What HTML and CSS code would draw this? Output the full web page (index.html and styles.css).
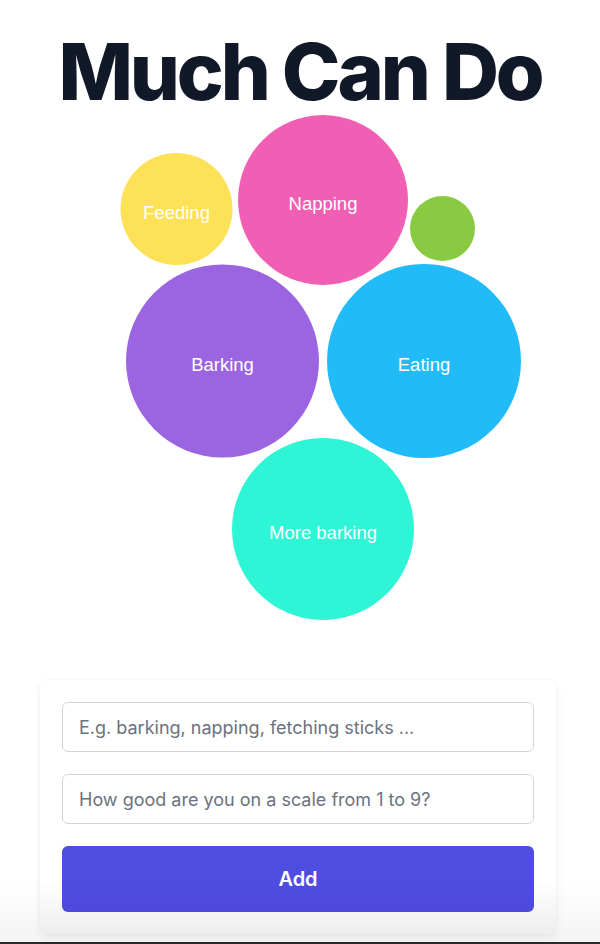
FILE: index.html
```html
<!DOCTYPE html>
<html lang="en">
<head>
<meta charset="utf-8">
<title>Much Can Do</title>
<link rel="stylesheet" href="styles.css">
</head>
<body>
<div class="page">
  <h1 class="title">Much Can Do</h1>
  <svg class="bubbles" width="600" height="520" viewBox="0 111 600 520" xmlns="http://www.w3.org/2000/svg">
    <g class="bubble">
      <circle cx="176.5" cy="209" r="56" fill="#fde157"/>
      <text x="176.5" y="219">Feeding</text>
    </g>
    <g class="bubble">
      <circle cx="323" cy="200" r="85" fill="#f05fb3"/>
      <text x="323" y="210">Napping</text>
    </g>
    <g class="bubble">
      <circle cx="442.5" cy="228.5" r="32.5" fill="#8ac942"/>
    </g>
    <g class="bubble">
      <circle cx="222.5" cy="361" r="96.5" fill="#9b64e0"/>
      <text x="222.5" y="371">Barking</text>
    </g>
    <g class="bubble">
      <circle cx="424" cy="361" r="97" fill="#21bcf8"/>
      <text x="424" y="371">Eating</text>
    </g>
    <g class="bubble">
      <circle cx="323" cy="529" r="91" fill="#2df5d5"/>
      <text x="323" y="539">More barking</text>
    </g>
  </svg>
  <form class="card">
    <input class="field" type="text" placeholder="E.g. barking, napping, fetching sticks ...">
    <input class="field" type="text" placeholder="How good are you on a scale from 1 to 9?">
    <button class="add" type="button">Add</button>
  </form>
</div>
<div class="fade"></div>
</body>
</html>
```
FILE: styles.css
```css
* { box-sizing: border-box; }
html, body { margin: 0; padding: 0; background: #fff; }
body { font-family: Inter, "Noto Sans", sans-serif; }

.page {
  width: 600px;
  height: 944px;
  overflow: hidden;
  border-bottom: 2px solid #2a2a2a;
  display: flex;
  flex-direction: column;
}

.title {
  margin: 0;
  padding-top: 32px;
  font-size: 79px;
  line-height: 79px;
  font-weight: 800;
  letter-spacing: -0.04em;
  text-align: center;
  color: #111827;
}

.bubbles { display: block; flex: none; }
.bubble text {
  font-family: "Liberation Sans", Arial, sans-serif;
  font-size: 18.5px;
  fill: #fff;
  text-anchor: middle;
}

.card {
  margin: 49px 44px 0 40px;
  width: 516px;
  padding: 22px;
  display: flex;
  flex-direction: column;
  gap: 22px;
  background: linear-gradient(to bottom, #fff 80%, #f7f7f7);
  border-radius: 8px;
  box-shadow: 0 4px 10px rgba(0,0,0,0.06), 0 0 4px rgba(0,0,0,0.03);
}

.field {
  height: 50px;
  width: 100%;
  border: 1px solid #d1d5db;
  border-radius: 6px;
  padding: 0 16px;
  font-family: Inter, "Noto Sans", sans-serif;
  font-size: 18px;
  color: #111827;
  background: #fff;
  outline: none;
}
.field::placeholder { color: #6b7280; opacity: 1; }

.add {
  height: 66px;
  width: 100%;
  border: none;
  border-radius: 6px;
  background: #4f4ce1;
  color: #fff;
  font-family: Inter, "Noto Sans", sans-serif;
  font-size: 20px;
  font-weight: 600;
  cursor: pointer;
}

.fade {
  position: fixed;
  left: 0;
  right: 0;
  bottom: 2px;
  height: 60px;
  background: linear-gradient(to bottom, rgba(0,0,0,0), rgba(0,0,0,0.045));
  pointer-events: none;
}
```
